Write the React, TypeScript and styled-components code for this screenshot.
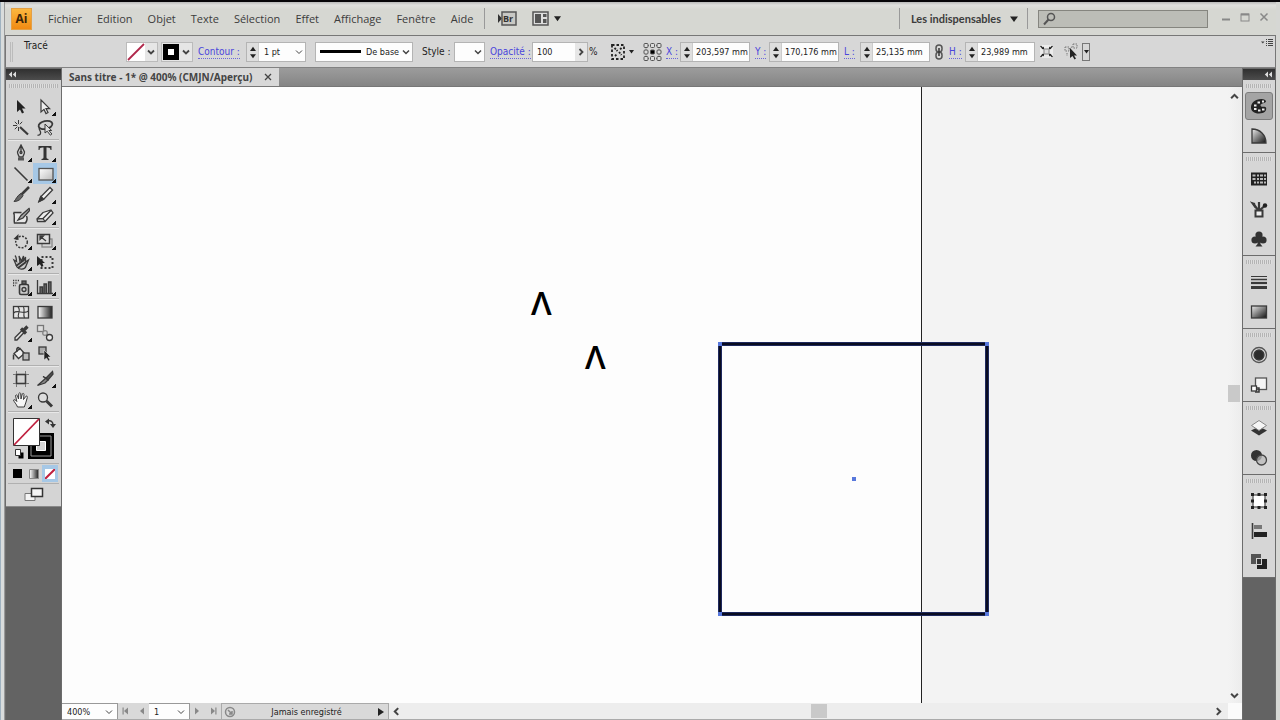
import React from 'react';
import styled, { createGlobalStyle } from 'styled-components';

const GlobalStyle = createGlobalStyle`
  * { box-sizing: border-box; }
  html, body { margin: 0; padding: 0; }
  body {
    font-family: 'Open Sans', 'Noto Sans', sans-serif;
    font-size: 11px;
    color: #333;
    background: #d6d6d4;
  }
  button, input, select { font: inherit; color: inherit; margin: 0; padding: 0; border: 0; border-radius: 0; background: none; }
  svg { display: block; flex: none; }
`;

const uiFont = "'DejaVu Sans Condensed', 'DejaVu Sans', sans-serif";

/* ---------- window ---------- */

const Window = styled.div`
  display: flex;
  flex-direction: column;
  min-height: 100vh;
  border-top: 2px solid #08060a;
  background: #d6d7d4;
`;

const Frame = styled.div`
  flex: 1;
  display: flex;
  flex-direction: column;
  padding: 0 4px 0 5px;
  background: linear-gradient(90deg, #9fb2c0 0, #9fb2c0 1px, #d9dcdc 1px, #d9dcdc 4px, #999 4px, #999 5px, #d6d7d4 5px);
`;

const Header = styled.header`
  display: flex;
  align-items: center;
  height: 34px;
  padding: 0 7px 0 6px;
  border-bottom: 1px solid #777;
  background: linear-gradient(#b9b9b9 0, #e0e0de 3px, #d6d7d2 8px, #d6d7d2);
`;

const Logo = styled.span`
  display: grid;
  place-items: center;
  width: 21px;
  height: 22px;
  margin-right: 16px;
  border: 1px solid #e4a045;
  background: linear-gradient(#fbb73f, #f08a12);
  color: #3b2408;
  font-size: 12px;
  line-height: 16px;
  font-weight: 700;
`;

const Menu = styled.nav`
  display: flex;
  gap: 15px;
  flex: none;
`;

const MenuButton = styled.button`
  color: #3c3c3c;
  line-height: 16px;
`;

const Divider = styled.span<{ $before: number; $after: number }>`
  flex: none;
  width: 1px;
  height: 21px;
  margin: 0 ${p => p.$after}px 0 ${p => p.$before}px;
  background: #999;
`;

const HeaderTools = styled.div`
  display: flex;
  gap: 15px;
  flex: none;
`;

const HeaderButton = styled.button`
  display: flex;
  align-items: center;
  gap: 5px;
  flex: none;
`;

const Workspace = styled(HeaderButton)`
  gap: 9px;
  font-family: Lato, sans-serif;
  font-weight: 700;
  line-height: 16px;
  color: #3c3c3c;
`;

const Spacer = styled.span`
  flex: 1;
`;

const Search = styled.label`
  display: flex;
  align-items: center;
  flex: none;
  width: 170px;
  height: 18px;
  padding-left: 4px;
  border: 1px solid #85857f;
  background: #bcbdb7;
  input { flex: 1; min-width: 0; outline: none; }
`;

const WindowButtons = styled.div`
  display: flex;
  gap: 8px;
  padding: 0 0 3px 12px;
  button { display: grid; place-items: center; width: 11px; height: 12px; }
`;

/* ---------- control bar ---------- */

const ControlBar = styled.div`
  display: grid;
  grid-template-columns:
    18px 102px 35px 37px 48px 69px 107px 32px 36px 42px 57px 21px 33px 23px
    14px 75px 14px 75px 16px 75px 14px 16px 74px 25px 1fr 14px;
  align-items: center;
  height: 32px;
  border-left: 1px solid #777;
  border-right: 1px solid #777;
  border-bottom: 1px solid #828282;
  background: #d7d7d7;
  font-family: ${uiFont};
  font-size: 9px;
  line-height: 12px;
  color: #222;
`;

const BarGrip = styled.span`
  width: 3px;
  height: 20px;
  margin-left: 4px;
  border: 1px solid #bbb;
  border-width: 0 1px;
`;

const Caption = styled.span<{ $raised?: boolean }>`
  ${p => (p.$raised ? 'align-self: start; padding-top: 4px;' : '')}
  font-size: 10px;
  white-space: nowrap;
`;

const LinkLabel = styled.label`
  justify-self: start;
  white-space: nowrap;
  color: #4a45dc;
  border-bottom: 1px dotted #6a66dc;
  font-size: 10px;
  line-height: 13px;
`;

const SwatchButton = styled.button`
  display: flex;
  height: 20px;
  border: 1px solid #bbb;
  justify-self: start;
`;

const DropCell = styled.span`
  display: grid;
  place-items: center;
  width: 12px;
  height: 18px;
  background: #e6e6e6;
`;

const Field = styled.span<{ $w: number }>`
  display: flex;
  align-items: stretch;
  width: ${p => p.$w}px;
  height: 20px;
  border: 1px solid #b4b4b4;
  background: #fdfdfd;
  input { flex: 1; min-width: 0; outline: none; }
`;

const ValueInput = styled.input<{ $pad: number }>`
  padding-left: ${p => p.$pad}px;
`;

const StepperBox = styled.span`
  display: flex;
  flex-direction: column;
  justify-content: center;
  gap: 3px;
  flex: none;
  width: 12px;
  background: #dedede;
  border-right: 1px solid #ccc;
  button { display: grid; place-items: center; height: 4px; }
`;

const SelectStack = styled.span`
  flex: 1;
  display: grid;
  grid-template-columns: 1fr 12px;
  align-items: center;
  min-width: 0;
  select {
    grid-area: 1 / 1 / 2 / 3;
    width: 100%;
    height: 100%;
    padding-left: 5px;
    appearance: none;
    outline: none;
  }
  svg { grid-area: 1 / 2 / 2 / 3; justify-self: center; pointer-events: none; }
`;

const BrushLine = styled.span`
  align-self: center;
  flex: none;
  width: 41px;
  height: 3px;
  margin-left: 4px;
  background: #000;
`;

const IconButton = styled.button`
  display: flex;
  align-items: center;
  gap: 3px;
  justify-self: start;
`;

const MenuIconButton = styled(IconButton)`
  align-self: start;
`;

const DropBox = styled.span`
  display: grid;
  place-items: center;
  width: 8px;
  height: 18px;
  border: 1px solid #777;
`;

/* ---------- workspace ---------- */

const Body = styled.div`
  flex: 1;
  display: grid;
  grid-template-columns: 57px 1fr 34px;
`;

const SidePanel = styled.aside`
  display: flex;
  flex-direction: column;
  border: 1px solid #6c6c6c;
  border-bottom: 0;
  background: #636363;
`;

const PanelHeader = styled.button<{ $end?: boolean }>`
  display: flex;
  align-items: center;
  justify-content: ${p => (p.$end ? 'flex-end' : 'flex-start')};
  height: 11px;
  padding: 0 2px;
  background: linear-gradient(#303030, #4c4c4c);
`;

const ToolSheet = styled.div`
  padding: 0 2px 2px;
  background: #d4d4d4;
  border-bottom: 1px solid #888;
`;

const Grip = styled.div<{ $tool?: boolean }>`
  height: 4px;
  margin: ${p => (p.$tool ? '4px 1px 6px' : '4px 3px')};
  background: repeating-linear-gradient(90deg, #b4b4b4 0 1px, #dedede 1px 2px);
`;

const ToolGroup = styled.div`
  display: grid;
  grid-template-columns: 24px 24px;
  grid-auto-rows: 21px;
  padding: 2px 0 1px 1px;
  border-bottom: 1px solid #b0b0b0;
  box-shadow: 0 1px 0 #e8e8e8;
`;

const ToolButton = styled.button<{ $active?: boolean; $fly?: boolean }>`
  display: grid;
  place-items: center;
  background:
    ${p => (p.$fly ? 'linear-gradient(135deg, transparent 50%, #111 50%) right 1px bottom 1px / 4px 4px no-repeat' : 'linear-gradient(transparent, transparent)')}
    ${p => (p.$active ? ', #a6c8e6' : '')};
`;

const FillStroke = styled.div`
  display: grid;
  place-items: center;
  height: 52px;
  border-bottom: 1px solid #b0b0b0;
`;

const ModeRow = styled.div`
  display: grid;
  grid-template-columns: repeat(3, 16px);
  justify-content: center;
  height: 20px;
  padding: 1px 0;
  border-bottom: 1px solid #b0b0b0;
`;

const ScreenRow = styled.div`
  display: grid;
  place-items: center;
  height: 20px;
`;

const DockGroup = styled.div`
  display: flex;
  flex-direction: column;
  background: #d6d6d6;
  border-bottom: 1px solid #6c6c6c;
`;

const DockButton = styled.button<{ $active?: boolean }>`
  display: grid;
  place-items: center;
  align-self: center;
  width: 28px;
  height: 28px;
  margin: 0 0 2px;
  border: 1px solid ${p => (p.$active ? '#7c7c7c' : 'transparent')};
  border-radius: 3px;
  background: ${p => (p.$active ? '#a4a4a4' : 'transparent')};
`;

const Center = styled.main`
  display: flex;
  flex-direction: column;
  min-width: 0;
`;

const TabBar = styled.div`
  display: flex;
  height: 19px;
  background: linear-gradient(#9c9c9c, #858585);
  border-bottom: 1px solid #777;
`;

const Tab = styled.div`
  display: flex;
  align-items: center;
  gap: 12px;
  padding: 0 7px;
  background: #d8d8d8;
  color: #444;
  font-family: 'Noto Sans', 'Open Sans', sans-serif;
  font-size: 10px;
  line-height: 16px;
  font-weight: 700;
  white-space: nowrap;
`;

const View = styled.div`
  flex: 1;
  display: flex;
`;

const Canvas = styled.div`
  position: relative;
  flex: 1;
  overflow: hidden;
  background: #f3f3f3;
`;

const Artboard = styled.div`
  position: absolute;
  left: 0;
  top: 0;
  bottom: 0;
  width: 860px;
  border-right: 1px solid #222;
  background: #fdfdfd;
`;

const Glyph = styled.span<{ $x: number; $y: number }>`
  position: absolute;
  left: ${p => p.$x}px;
  top: ${p => p.$y}px;
  font-size: 33px;
  font-weight: 600;
  line-height: 36px;
  color: #000;
`;

const Shape = styled.svg`
  position: absolute;
  left: 656px;
  top: 255px;
`;

const VScroll = styled.div`
  display: flex;
  flex-direction: column;
  align-items: center;
  width: 14px;
  padding: 5px 2px 3px 0;
  background: linear-gradient(90deg, #f3f3f3, #ececec);
`;

const ThumbV = styled.span`
  width: 12px;
  height: 17px;
  background: #c9c9c9;
`;

const Gap = styled.span<{ $grow: number }>`
  flex: ${p => p.$grow} 1 0;
`;

const StatusBar = styled.footer`
  display: flex;
  align-items: stretch;
  height: 17px;
  border-bottom: 1px solid #aaa;
  background: #d9d9d9;
  font-family: ${uiFont};
  font-size: 9px;
  line-height: 12px;
  color: #222;
`;

const StatusField = styled.span<{ $w: number }>`
  display: flex;
  flex: none;
  width: ${p => p.$w}px;
  padding-right: 2px;
  background: #fdfdfd;
  border: 1px solid #999;
  border-width: 1px 1px 0 0;
`;

const NavPair = styled.span<{ $w: number }>`
  display: flex;
  align-items: center;
  justify-content: center;
  gap: 9px;
  flex: none;
  width: ${p => p.$w}px;
`;

const StatusText = styled.button`
  display: flex;
  align-items: center;
  flex: none;
  width: 168px;
  padding: 0 3px 0 2px;
  border: 1px solid #aaa;
  border-width: 1px 1px 0;
  span { flex: 1; text-align: center; }
`;

const HScroll = styled.div`
  flex: 1;
  display: flex;
  align-items: center;
  padding: 0 5px 0 3px;
  background: #ededed;
`;

const ThumbH = styled.span`
  width: 16px;
  height: 14px;
  background: #c9c9c9;
`;

const Corner = styled.span`
  width: 14px;
  background: #fbfbfb;
`;

/* ---------- small drawings ---------- */

const Tri = ({ dir = 'down', s = 7 }: { dir?: string; s?: number }) => {
  const d: Record<string, string> = {
    down: 'M0 1.5h8L4 7z',
    up: 'M0 6.5h8L4 1z',
    left: 'M7 0v8L1 4z',
    right: 'M1 0v8l6-4z',
  };
  return <svg width={s} height={s} viewBox="0 0 8 8"><path d={d[dir]} fill="#222" /></svg>;
};

const Chevron = ({ dir = 'down', w = 1.5, s = 8 }: { dir?: string; w?: number; s?: number }) => {
  const d: Record<string, string> = {
    down: 'M1 2.5l3 3 3-3',
    up: 'M1 5.5l3-3 3 3',
    left: 'M5.5 1l-3 3 3 3',
    right: 'M2.5 1l3 3-3 3',
  };
  return <svg width={s} height={s} viewBox="0 0 8 8" fill="none" stroke="#444" strokeWidth={w}><path d={d[dir]} /></svg>;
};

const DoubleLeft = () => (
  <svg width="9" height="7" viewBox="0 0 9 7" fill="#ddd"><path d="M4 0.5v6L0.8 3.5zM8 0.5v6L4.8 3.5z" /></svg>
);

const Nav = ({ flip, end }: { flip?: boolean; end?: boolean }) => (
  <svg width="7" height="8" viewBox="0 0 7 8" fill="#888">
    <g transform={flip ? 'translate(7 0) scale(-1 1)' : undefined}>
      <path d="M6 0.5v7L2 4z" />
      {end && <path d="M0.5 0.5h1.2v7H0.5z" />}
    </g>
  </svg>
);

const Icon = ({ children, s = 18 }: { children: React.ReactNode; s?: number }) => (
  <svg width={s} height={s} viewBox="0 0 18 18" fill="none" stroke="#3a3a3a" strokeWidth="1.3">{children}</svg>
);

const tools: Record<string, React.ReactNode> = {
  select: <path d="M5 2v12l3-2.6 2 4.2 2-1-2-4h3.6z" fill="#222" stroke="none" />,
  direct: <path d="M5 2v12l3-2.6 2 4.2 2-1-2-4h3.6z" fill="#eee" strokeWidth="1.2" />,
  wand: <><path d="M8 8l8 7.5" strokeWidth="2.2" /><path d="M6.5 1v4M6.5 8v4M1 6.5h4M2.8 2.8l2.5 2.5M10.2 2.8L7.8 5.3M2.8 10.2l2.5-2.5" strokeWidth="1" /></>,
  lasso: <><ellipse cx="9.5" cy="6" rx="7" ry="4" strokeWidth="1.8" transform="rotate(-12 9.5 6)" /><path d="M3.5 8.500c-1.500 2.500 2 3 1 6-.5 1.500-2 2-3 1.500" /><path d="M9 5v9l2.200-1.800 3.200 4 1.500-1.200-3-3.500h2.800z" fill="#ddd" strokeWidth="1" /></>,
  pen: <><path d="M9 1l-3.500 7c0 2 1.500 4 1.700 5h3.600c.2-1 1.700-3 1.700-5zM9 2v6" /><circle cx="9" cy="8.500" r="1" /><path d="M6 15h6" strokeWidth="3" stroke="#555" /></>,
  type: <path d="M2.500 2h13v4h-1c-.2-1.800-1-2.500-3-2.500h-1V13c0 1.500.5 1.800 2 2v1h-7v-1c1.500-.2 2-.5 2-2V3.500h-1c-2 0-2.800.7-3 2.500h-1z" fill="#333" stroke="none" />,
  line: <path d="M2.500 2.500l13 13" strokeWidth="1.600" />,
  rect: <rect x="3" y="3.500" width="14" height="11.500" fill="url(#lightGrad)" stroke="#555" />,
  brush: <><path d="M17 1L9 9" strokeWidth="2.500" /><path d="M9 7.500l2 2c-2 4-5 6-9 6 2-2 3-6 7-8z" fill="#666" strokeWidth="1" /></>,
  pencil: <><path d="M14 1.500l2.500 2.500-9 9.500-4.500 2 1.500-4.500z" fill="#eee" /><path d="M5 10.500l2.500 2.500-4.500 2.500z" fill="#333" /></>,
  blob: <><path d="M1.500 5.500h8M1.500 5.500c2 3 0 6 1 10.500h11c2-3 2-5 1-7" fill="#e6e6e6" strokeWidth="1.500" /><path d="M17 1.500l-8 7-3 4.500 5-2 7-8z" fill="#aaa" /></>,
  eraser: <><path d="M7 5.500L15 3l2 3-8 8.500H1.500L1 12z" fill="#eee" /><path d="M1 12l6-.5L15 3.500M7 11.500l2 3" /></>,
  rotate: <><circle cx="9.500" cy="10" r="5.800" strokeDasharray="2 1.400" strokeWidth="1.500" /><path d="M1.500 7l5-5v6z" fill="#333" stroke="none" /></>,
  scale: <><rect x="6" y="7" width="10" height="8" stroke="#888" /><rect x="1.500" y="2.500" width="12" height="9" fill="#ddd" strokeWidth="1.500" /><path d="M5 5l5 4M4 4h3.500L4 7.500z" fill="#333" /></>,
  warp: <><path d="M3 2.500c2 2 1 4 1.500 6L2 7l3 7c2 3 8 3 9-1l2.500-6-3 2V4l-2 4V3L9.500 8 7 3l1 6" fill="#ccc" /><path d="M4 13l8-6M6 15l8-6" strokeWidth="2" /></>,
  free: <><rect x="5.500" y="4" width="11" height="11" strokeDasharray="2 2" strokeWidth="2" /><path d="M1 3v10l3-2 1.500 3 2-1L6 10h3z" fill="#222" stroke="none" /></>,
  spray: <><rect x="7.500" y="6.500" width="9" height="10" rx="1.500" fill="#ccc" strokeWidth="1.600" /><rect x="10" y="3" width="4" height="3" fill="#666" /><circle cx="12" cy="11.500" r="2" /><path d="M1 2.500h7M1 5h5M1 7.500h3" strokeDasharray="1.200 1.200" strokeWidth="1.600" /></>,
  graph: <><path d="M1.500 2v13.500H17" /><path d="M4 15V9h2.500v6M8 15V6h2.500v9M12.500 15V4H15v11" fill="#666" /></>,
  mesh: <><rect x="1.500" y="3.500" width="15" height="11.500" fill="#e4e4e4" /><path d="M1.500 10c4-4 10 2 15-2M6 4c4 4-2 7 1 11M11.500 4c2 4-1 7 1 11" strokeWidth="1.100" /></>,
  gradient: <rect x="2" y="3.500" width="14" height="11.500" fill="url(#darkGradH)" />,
  eyedrop: <><path d="M10.500 6L3 13.500V16h2l7.500-8" fill="#ddd" /><path d="M9 4.500l5 5M11.500 6.500l4-4" strokeWidth="3.200" /></>,
  blend: <><rect x="1.500" y="1.500" width="6" height="6" fill="#ddd" stroke="#777" /><circle cx="9" cy="9" r="2.300" stroke="#888" /><circle cx="13.500" cy="13.500" r="3" fill="#eee" /></>,
  livepaint: <><path d="M2 8.500l6-5 4.500 5-6 5z" fill="#eee" /><path d="M5 7c-1-5 2-6 3-2M1.500 9.500v5" strokeWidth="1.500" /><rect x="11" y="8" width="6" height="7" fill="#bbb" /></>,
  livesel: <><rect x="3" y="2" width="7" height="7" fill="#aaa" /><path d="M8 5v10l2.500-2 1.800 3 1.700-1-1.800-3H15z" fill="#222" stroke="#ddd" strokeWidth=".6" /></>,
  artboard: <><rect x="4.500" y="4.500" width="9" height="9" strokeWidth="1.600" /><path d="M4.500 1v3M1 4.500h3M13.500 17v-3M17 13.500h-3M13.500 1v3M17 4.500h-3M4.500 17v-3M1 13.500h3" stroke="#777" strokeWidth="1" /></>,
  slice: <><path d="M16.500 1.500L10 8l2 2 5-6z" fill="#555" /><path d="M10 8L1.500 15.500 9 13l3-3-5-3.500z" fill="#888" /></>,
  hand: <path d="M5.500 16C4.500 13 2 11 1.500 9c1-1 2 0 3.300 1.500L3.500 4.500c.8-1 1.700-.5 2 .5L6.500 8 6.800 2.500c.7-1 1.700-.8 1.900 0L9 8l1.300-5.200c.8-.8 1.700-.4 1.700.6L11.500 8.500l2.500-3.300c1-.5 1.600.3 1.300 1.300-1 3-1.500 6-3 9.500z" fill="#f6f6f6" strokeWidth="1" />,
  zoom: <><circle cx="7" cy="6.500" r="4.500" fill="#ddd" /><path d="M10.500 10l5.500 5.500" strokeWidth="3" /></>,
};

const toolGroups: { id: string; name: string; fly?: boolean; active?: boolean }[][] = [
  [
    { id: 'select', name: 'Sélection' }, { id: 'direct', name: 'Sélection directe', fly: true },
    { id: 'wand', name: 'Baguette magique' }, { id: 'lasso', name: 'Lasso' },
  ],
  [
    { id: 'pen', name: 'Plume', fly: true }, { id: 'type', name: 'Texte', fly: true },
    { id: 'line', name: 'Trait', fly: true }, { id: 'rect', name: 'Rectangle', fly: true, active: true },
    { id: 'brush', name: 'Pinceau' }, { id: 'pencil', name: 'Crayon', fly: true },
    { id: 'blob', name: 'Forme de tache' }, { id: 'eraser', name: 'Gomme', fly: true },
  ],
  [
    { id: 'rotate', name: 'Rotation', fly: true }, { id: 'scale', name: 'Mise à l’échelle', fly: true },
    { id: 'warp', name: 'Déformation', fly: true }, { id: 'free', name: 'Transformation manuelle' },
  ],
  [{ id: 'spray', name: 'Pulvérisation', fly: true }, { id: 'graph', name: 'Graphe', fly: true }],
  [
    { id: 'mesh', name: 'Filet' }, { id: 'gradient', name: 'Dégradé' },
    { id: 'eyedrop', name: 'Pipette', fly: true }, { id: 'blend', name: 'Dégradé de formes' },
    { id: 'livepaint', name: 'Pot de peinture' }, { id: 'livesel', name: 'Sélection de peinture' },
  ],
  [
    { id: 'artboard', name: 'Plan de travail' }, { id: 'slice', name: 'Tranche', fly: true },
    { id: 'hand', name: 'Main', fly: true }, { id: 'zoom', name: 'Zoom' },
  ],
];

const dock: Record<string, React.ReactNode> = {
  Couleur: <><path d="M11.500 2C5 2 1 6 1 10.500 1 14 4 16.500 9 16.500c5.500 0 8-3 7-6-1-2-5 .5-5.500-2C10 6.500 16 6 16 4.500 16 3 14 2 11.500 2z" fill="#222" stroke="none" /><path d="M4 8.500h2.500M7.500 5.500H10M12 4.500h2M4 12h2.500M8 13.500h2.500M12 12.500h2.500" stroke="#eee" strokeWidth="2" /></>,
  'Guide des couleurs': <path d="M2 2v14h14C16 8 10 2 2 2z" fill="url(#darkGradD)" />,
  Nuancier: <><rect x="1" y="2.500" width="16" height="13" fill="#222" stroke="none" /><path d="M2.500 5.500h3M7 5.500h2M10 5.500h3M7 9h2M10 9h3M2.500 9h3M4 12.500h2M7 12.500h2M10 12.500h3M14 5.500h2M14 9h2M14 12.500h2" stroke="#bbb" strokeWidth="1.800" /></>,
  Formes: <><rect x="5.500" y="10.500" width="7" height="6" fill="#eee" strokeWidth="2" /><path d="M8 10L3.500 4M9 10V2M10 10l4.500-4" strokeWidth="2.200" /><circle cx="15" cy="5.500" r="2.200" fill="#222" stroke="none" /><path d="M1.500 2.500l3 1v3z" fill="#222" /></>,
  Symboles: <g fill="#333" stroke="none"><circle cx="9" cy="5" r="3.600" /><circle cx="5" cy="10" r="3.600" /><circle cx="13" cy="10" r="3.600" /><path d="M8 8h2l.5 6 2 2.500h-7l2-2.500z" /></g>,
  Contour: <><path d="M1 3.500h16" strokeWidth="1" /><path d="M1 6.500h16" strokeWidth="1.500" /><path d="M1 10h16" strokeWidth="2.200" /><path d="M1 14.500h16" strokeWidth="3" /></>,
  Dégradé: <rect x="1.500" y="3" width="15" height="12" fill="url(#darkGradD)" />,
  Aspect: <><circle cx="9" cy="9" r="7.500" fill="#ddd" stroke="#555" /><circle cx="9" cy="9" r="5" fill="#2c2c2c" /></>,
  'Styles graphiques': <><rect x="5.500" y="2" width="11" height="11.500" fill="#f5f5f5" stroke="#555" /><rect x="1.500" y="10" width="5" height="5" fill="#fff" /><path d="M6 12h3v4H5" strokeWidth="1.500" /></>,
  Calques: <><path d="M1 11.500l8-4 8 4-8 5z" fill="#333" stroke="none" /><path d="M1.500 6.500L9 1.500l7.500 5L9 11.500z" fill="#f5f5f5" stroke="#888" strokeWidth="1" /></>,
  Transparence: <><circle cx="6.500" cy="6.500" r="5.500" fill="#333" stroke="none" /><circle cx="11.500" cy="11" r="5" fill="#bbbb" stroke="#444" /></>,
  Transformation: <><rect x="3" y="3" width="12" height="12" fill="#fff" stroke="#555" /><path d="M1 2.500h3M7.500 2.500h3M14 2.500h3M1 9h3M14 9h3M1 15.500h3M7.500 15.500h3M14 15.500h3" strokeWidth="3" stroke="#222" /></>,
  Alignement: <><path d="M2.500 1v16" strokeWidth="1.600" /><rect x="4" y="3" width="8" height="4" fill="#777" stroke="none" /><rect x="4" y="10" width="13" height="5" fill="#222" stroke="none" /></>,
  Pathfinder: <><path d="M1 2h10v4H6v6H1z" fill="#555" stroke="none" /><path d="M12 7h5v10H7v-4h5z" fill="#222" stroke="none" /><rect x="7" y="7" width="4" height="5" fill="#333" stroke="none" /></>,
};

const dockGroups = [
  ['Couleur', 'Guide des couleurs'],
  ['Nuancier', 'Formes', 'Symboles'],
  ['Contour', 'Dégradé'],
  ['Aspect', 'Styles graphiques'],
  ['Calques', 'Transparence'],
  ['Transformation', 'Alignement', 'Pathfinder'],
];

const GradientDefs = styled.svg`
  position: absolute;
`;

const Gradients = () => (
  <GradientDefs width="0" height="0" aria-hidden="true">
    <defs>
      <linearGradient id="lightGrad" x2="1" y2="1"><stop stopColor="#fff" /><stop offset="1" stopColor="#bbb" /></linearGradient>
      <linearGradient id="darkGradH"><stop stopColor="#fff" /><stop offset="1" stopColor="#222" /></linearGradient>
      <linearGradient id="darkGradD" x2="1" y2="1"><stop stopColor="#eee" /><stop offset="1" stopColor="#111" /></linearGradient>
    </defs>
  </GradientDefs>
);

const Stepper = ({ name }: { name: string }) => (
  <StepperBox>
    <button aria-label={`Augmenter ${name}`}><Tri dir="up" s={6} /></button>
    <button aria-label={`Diminuer ${name}`}><Tri s={6} /></button>
  </StepperBox>
);

const Measure = ({ id, label, value }: { id: string; label: string; value: string }) => (
  <>
    <LinkLabel htmlFor={id}>{label} :</LinkLabel>
    <Field $w={70}>
      <Stepper name={label} />
      <ValueInput id={id} defaultValue={value} $pad={3} />
    </Field>
  </>
);

const menus = ['Fichier', 'Edition', 'Objet', 'Texte', 'Sélection', 'Effet', 'Affichage', 'Fenêtre', 'Aide'];

export default function App() {
  return (
    <Window>
      <GlobalStyle />
      <Gradients />
      <Frame>
        <Header>
          <Logo>Ai</Logo>
          <Menu>{menus.map(m => <MenuButton key={m}>{m}</MenuButton>)}</Menu>
          <Divider $before={11} $after={13} />
          <HeaderTools>
            <HeaderButton aria-label="Bridge">
              <svg width="19" height="16" viewBox="0 0 19 16" fill="none" stroke="#555" strokeWidth="1.500">
                <path d="M0 3l4 4.500L0 12z" fill="#333" stroke="none" />
                <rect x="4" y="1" width="14" height="13" fill="#c8c8c4" />
                <text x="5" y="11" fontSize="9" fontWeight="700" fill="#333" stroke="none">Br</text>
              </svg>
            </HeaderButton>
            <HeaderButton aria-label="Réorganiser les documents">
              <svg width="17" height="16" viewBox="0 0 17 16" fill="none" stroke="#555" strokeWidth="1.500">
                <rect x="1" y="1" width="15" height="13" fill="#ddd" />
                <path d="M3 3h6v9H3zM11 3h3.500v3H11zM11 8h3.500v4H11z" fill="#555" stroke="none" />
              </svg>
              <Tri />
            </HeaderButton>
          </HeaderTools>
          <Spacer />
          <Divider $before={0} $after={11} />
          <Workspace>Les indispensables <Tri s={8} /></Workspace>
          <Divider $before={9} $after={10} />
          <Search aria-label="Rechercher">
            <svg width="14" height="14" viewBox="0 0 14 14" fill="none" stroke="#555" strokeWidth="1.500">
              <circle cx="8" cy="5" r="3.500" /><path d="M5.500 7.500L1 12.500" strokeWidth="2" />
            </svg>
            <input type="text" />
          </Search>
          <WindowButtons>
            <button aria-label="Réduire"><svg width="10" height="10" viewBox="0 0 10 10" stroke="#888" strokeWidth="2"><path d="M1 7.500h8" /></svg></button>
            <button aria-label="Agrandir"><svg width="10" height="10" viewBox="0 0 10 10" fill="none" stroke="#888"><rect x="1" y="2" width="8" height="7" /><path d="M1 2.500h8" strokeWidth="2" /></svg></button>
            <button aria-label="Fermer"><svg width="10" height="10" viewBox="0 0 10 10" stroke="#888" strokeWidth="1.500"><path d="M1.500 1.500l7 7M8.500 1.500l-7 7" /></svg></button>
          </WindowButtons>
        </Header>

        <ControlBar>
          <BarGrip />
          <Caption $raised>Tracé</Caption>
          <SwatchButton aria-label="Fond">
            <svg width="18" height="18" viewBox="0 0 18 18"><path d="M0 0h18v18H0z" fill="#fff" /><path d="M1 17L17 1" stroke="#b0264a" strokeWidth="1.800" /></svg>
            <DropCell><Chevron w={1.8} /></DropCell>
          </SwatchButton>
          <SwatchButton aria-label="Contour">
            <svg width="18" height="18" viewBox="0 0 18 18"><path d="M0 0h18v18H0z" fill="#e6e6e6" /><path d="M1 1h16v16H1z" /><path d="M6 6h6v6H6z" fill="#fff" /></svg>
            <DropCell><Chevron w={1.8} /></DropCell>
          </SwatchButton>
          <LinkLabel htmlFor="weight">Contour :</LinkLabel>
          <Field $w={60}>
            <Stepper name="contour" />
            <SelectStack>
              <select id="weight"><option>1 pt</option></select>
              <Chevron w={1} />
            </SelectStack>
          </Field>
          <Field $w={98}>
            <BrushLine />
            <SelectStack>
              <select aria-label="Forme"><option>De base</option></select>
              <Chevron />
            </SelectStack>
          </Field>
          <Caption as="label" htmlFor="style">Style :</Caption>
          <Field $w={31}>
            <SelectStack>
              <select id="style"><option aria-label="Style par défaut" /></select>
              <Chevron />
            </SelectStack>
          </Field>
          <LinkLabel htmlFor="opacity">Opacité :</LinkLabel>
          <Field $w={56}>
            <ValueInput id="opacity" defaultValue="100" $pad={4} />
            <DropCell><Chevron dir="right" w={1.8} /></DropCell>
          </Field>
          <Caption>%</Caption>
          <IconButton aria-label="Redéfinir les couleurs">
            <svg width="16" height="18" viewBox="0 0 16 18" fill="none" stroke="#222" strokeWidth="1.800"><rect x="2" y="2" width="12" height="14" strokeDasharray="2.500 2" /><path d="M4.500 5l3 3M9 9l2.500 3M11.500 5l-2 2M5 13l2-2" strokeDasharray="2 1" /></svg>
            <Tri s={5} />
          </IconButton>
          <IconButton aria-label="Point de référence">
            <svg width="19" height="20" viewBox="0 0 19 20" stroke="#555">
              <path d="M3 3.500h13v13H3z" fill="none" strokeDasharray="1 1" stroke="#777" />
              {[3, 9.500, 16].map(x => [3.500, 10, 16.500].map(y => <rect key={`${x}-${y}`} x={x - 2} y={y - 2} width="4" height="4" rx="1" fill={x === 9.500 && y === 10 ? '#000' : '#ddd'} />))}
            </svg>
          </IconButton>
          <Measure id="x" label="X" value="203,597 mm" />
          <Measure id="y" label="Y" value="170,176 mm" />
          <Measure id="w" label="L" value="25,135 mm" />
          <IconButton aria-label="Conserver les proportions">
            <svg width="8" height="16" viewBox="0 0 8 16" fill="none" stroke="#555" strokeWidth="1.500"><rect x="1" y="1" width="6" height="7" rx="3" /><rect x="1" y="8" width="6" height="7" rx="3" /><path d="M4 4v8" stroke="#333" /></svg>
          </IconButton>
          <Measure id="h" label="H" value="23,989 mm" />
          <IconButton aria-label="Isoler">
            <svg width="15" height="15" viewBox="0 0 15 15" fill="none" stroke="#222" strokeWidth="1.300"><rect x="1" y="1" width="13" height="13" fill="#ececec" stroke="none" /><rect x="5" y="5" width="5" height="5" fill="#ddd" stroke="#999" /><path d="M1.500 2l3 3M13.500 2l-3 3M1.500 13l3-3M13.500 13l-3-3" /><path d="M5 2.500V5H2.500zM10 2.500V5h2.500zM5 12.500V10H2.500zM10 12.500V10h2.500z" fill="#222" stroke="none" /></svg>
          </IconButton>
          <IconButton aria-label="Sélectionner des objets similaires">
            <svg width="15" height="17" viewBox="0 0 15 17" fill="none" stroke="#777"><path d="M1 4h4v4H1zM9 1h4v4H9zM5 6l4-3M3 10v3" strokeDasharray="1.500 1" /><path d="M6 5v10l2.500-2 2 3.500 1.500-1-2-3H13z" fill="#222" stroke="none" /></svg>
            <DropBox><Tri s={5} /></DropBox>
          </IconButton>
          <MenuIconButton aria-label="Menu du panneau">
            <svg width="12" height="14" viewBox="0 0 12 14" stroke="#444"><path d="M0 5.500h3.500L1.800 7.500z" fill="#444" stroke="none" /><path d="M5 3.500h1M7 3.500h5M5 5.500h1M7 5.500h5M5 7.500h1M7 7.500h5M5 9.500h1M7 9.500h5" /></svg>
          </MenuIconButton>
        </ControlBar>

        <Body>
          <SidePanel>
            <PanelHeader aria-label="Réduire les outils"><DoubleLeft /></PanelHeader>
            <ToolSheet>
              <Grip $tool />
              {toolGroups.map((g, i) => (
                <ToolGroup key={i}>
                  {g.map(t => (
                    <ToolButton key={t.id} aria-label={t.name} $fly={t.fly} $active={t.active}>
                      <Icon>{tools[t.id]}</Icon>
                    </ToolButton>
                  ))}
                </ToolGroup>
              ))}
              <FillStroke>
                <svg width="44" height="46" viewBox="0 0 44 46" fill="none">
                  <path d="M16 18h26v26H16z" fill="#000" /><path d="M19 21h20v20H19z" stroke="#999" /><path d="M24.500 26.500h9v9h-9z" fill="#d4d4d4" stroke="#fff" />
                  <path d="M1.500 3.500h26v27h-26z" fill="#fff" stroke="#333" /><path d="M2 30L27 4" stroke="#c0203f" strokeWidth="1.800" />
                  <path d="M36 6c3-1 5 1 5 4" stroke="#333" strokeWidth="1.500" /><path d="M33 6.500l4-3v6zM38 9h6l-3 4z" fill="#333" />
                  <path d="M6.500 37.500h5v6h-5z" fill="#000" /><path d="M3.500 34.500h5v6h-5z" fill="#fff" stroke="#333" />
                </svg>
              </FillStroke>
              <ModeRow>
                <ToolButton aria-label="Couleur"><svg width="9" height="9"><path d="M0 0h9v9H0z" /></svg></ToolButton>
                <ToolButton aria-label="Dégradé"><svg width="10" height="10"><path d="M.5.5h9v9h-9z" fill="url(#darkGradH)" stroke="#888" /></svg></ToolButton>
                <ToolButton aria-label="Sans" $active><svg width="10" height="10"><path d="M0 0h10v10H0z" fill="#fff" /><path d="M0 10L10 0" stroke="#c0203f" strokeWidth="2" /></svg></ToolButton>
              </ModeRow>
              <ScreenRow>
                <ToolButton aria-label="Mode d’affichage">
                  <svg width="20" height="16" viewBox="0 0 20 16" fill="#f4f4f4" stroke="#333"><path d="M1 7.500h10v7H1z" stroke="#777" /><path d="M7.500 2.500h11v8h-11z" strokeWidth="1.500" /></svg>
                </ToolButton>
              </ScreenRow>
            </ToolSheet>
          </SidePanel>

          <Center>
            <TabBar>
              <Tab>
                Sans titre - 1* @ 400% (CMJN/Aperçu)
                <button aria-label="Fermer l’onglet">
                  <svg width="8" height="8" viewBox="0 0 8 8" stroke="#444" strokeWidth="1.300"><path d="M1 1l6 6M7 1L1 7" /></svg>
                </button>
              </Tab>
            </TabBar>
            <View>
              <Canvas>
                <Artboard />
                <Glyph $x={469} $y={198}>Λ</Glyph>
                <Glyph $x={523} $y={252}>Λ</Glyph>
                <Shape width="272" height="275" viewBox="0 0 272 275" fill="none">
                  <path d="M2 2h267v270H2z" stroke="#34469c" strokeWidth="4" />
                  <path d="M2 2h267v270H2z" stroke="#090c20" strokeWidth="3" />
                  <path d="M0 0h4v4H0zM267 0h4v4h-4zM0 270h4v4H0zM267 270h4v4h-4zM134 135h4v4h-4z" fill="#5878dc" />
                </Shape>
              </Canvas>
              <VScroll>
                <Chevron dir="up" w={1.800} s={9} />
                <Gap $grow={284} />
                <ThumbV />
                <Gap $grow={290} />
                <Chevron dir="down" w={1.800} s={9} />
              </VScroll>
            </View>
            <StatusBar>
              <StatusField $w={56}>
                <SelectStack>
                  <select aria-label="Zoom"><option>400%</option></select>
                  <Chevron w={1} />
                </SelectStack>
              </StatusField>
              <NavPair $w={31}><Nav end /><Nav /></NavPair>
              <StatusField $w={41}>
                <SelectStack>
                  <select aria-label="Plan de travail"><option>1</option></select>
                  <Chevron w={1} />
                </SelectStack>
              </StatusField>
              <NavPair $w={31}><Nav flip /><Nav flip end /></NavPair>
              <StatusText>
                <svg width="12" height="12" viewBox="0 0 12 12" fill="none" stroke="#888" strokeWidth="1.500"><circle cx="6" cy="6" r="4.500" /><path d="M4 4l4 4M8 5v3H5" /></svg>
                <span>Jamais enregistré</span>
                <Tri dir="right" s={8} />
              </StatusText>
              <HScroll>
                <Chevron dir="left" w={1.800} s={9} />
                <Gap $grow={411} />
                <ThumbH />
                <Gap $grow={388} />
                <Chevron dir="right" w={1.800} s={9} />
              </HScroll>
              <Corner />
            </StatusBar>
          </Center>

          <SidePanel>
            <PanelHeader $end aria-label="Développer les panneaux"><DoubleLeft /></PanelHeader>
            {dockGroups.map(g => (
              <DockGroup key={g[0]}>
                <Grip />
                {g.map(n => (
                  <DockButton key={n} aria-label={n} $active={n === 'Couleur'}>
                    <Icon>{dock[n]}</Icon>
                  </DockButton>
                ))}
              </DockGroup>
            ))}
          </SidePanel>
        </Body>
      </Frame>
    </Window>
  );
}
